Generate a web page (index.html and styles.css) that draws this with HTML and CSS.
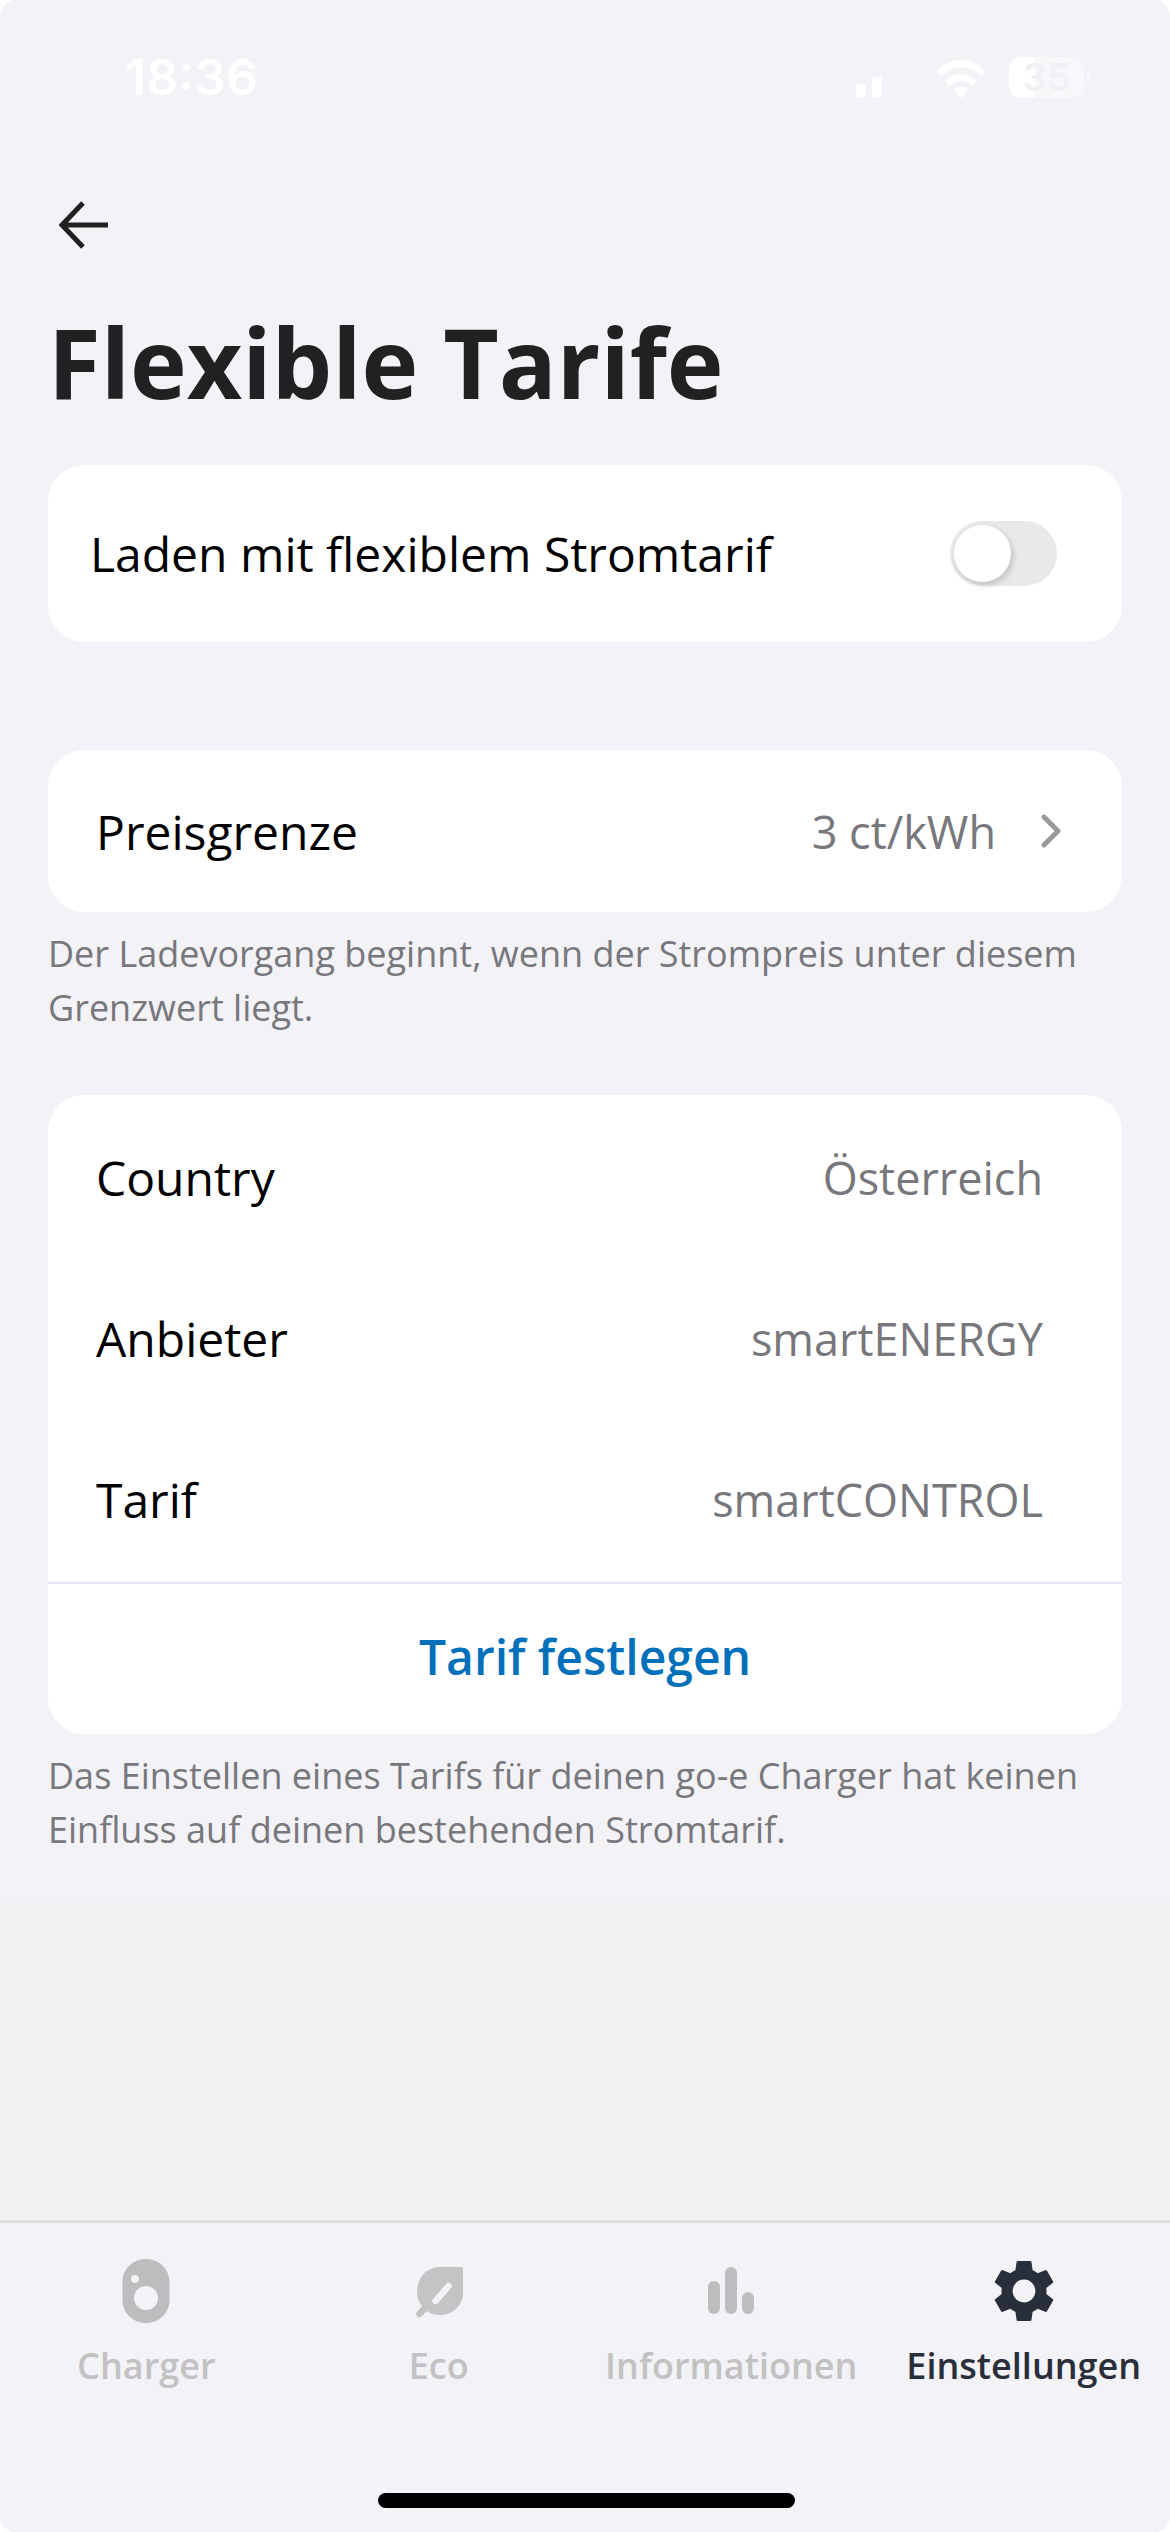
FILE: index.html
```html
<!DOCTYPE html>
<html lang="de">
<head>
<meta charset="utf-8">
<title>Flexible Tarife</title>
<link rel="stylesheet" href="styles.css">
</head>
<body>
<div class="app">
  <div class="content">
    <header class="status">
      <span class="time">18:36</span>
      <div class="status-icons">
        <svg class="signal" width="58" height="36" viewBox="0 0 58 36"><rect x="0" y="22" width="10" height="14" rx="3" fill="#fff"/><rect x="16" y="15" width="10" height="21" rx="3" fill="#fff"/><rect x="32" y="8" width="10" height="28" rx="3" fill="#fff" opacity=".2"/><rect x="48" y="0" width="10" height="36" rx="3" fill="#fff" opacity=".2"/></svg>
        <svg class="wifi" width="50" height="38" viewBox="0 0 50 38"><path d="M0 12C6 5 15 0 25 0s19 5 25 12l-5 5C40 11 33 7 25 7S10 11 5 17Z M9 21c4-4 10-7 16-7s12 3 16 7l-5 5c-3-3-7-5-11-5s-8 2-11 5Z M17 30c2-2 5-3 8-3s6 1 8 3l-8 8Z" fill="#fff"/></svg>
        <div class="battery"><span class="battery-text">35</span></div>
        <div class="battery-nub"></div>
      </div>
    </header>
    <button class="back" aria-label="Zurück">
      <svg width="50" height="48" viewBox="0 0 50 48"><path d="M24 2 3 24l21 22M3 24h46" fill="none" stroke="#212121" stroke-width="5"/></svg>
    </button>
    <h1 class="title">Flexible Tarife</h1>

    <section class="card toggle-card">
      <span class="toggle-label">Laden mit flexiblem Stromtarif</span>
      <div class="toggle"><div class="knob"></div></div>
    </section>

    <section class="card price-card">
      <span class="label">Preisgrenze</span>
      <span class="value">3 ct/kWh</span>
      <svg class="chevron" width="20" height="34" viewBox="0 0 20 34"><path d="M3 3l14 14L3 31" fill="none" stroke="#9a9a9a" stroke-width="5" stroke-linecap="round" stroke-linejoin="round"/></svg>
    </section>
    <p class="note">Der Ladevorgang beginnt, wenn der Strompreis unter diesem Grenzwert liegt.</p>

    <section class="card tariff-card">
      <div class="row"><span class="label">Country</span><span class="value">Österreich</span></div>
      <div class="row"><span class="label">Anbieter</span><span class="value">smartENERGY</span></div>
      <div class="row"><span class="label">Tarif</span><span class="value">smartCONTROL</span></div>
      <div class="action">Tarif festlegen</div>
    </section>
    <p class="note">Das Einstellen eines Tarifs für deinen go-e Charger hat keinen Einfluss auf deinen bestehenden Stromtarif.</p>
  </div>
  <div class="filler"></div>
  <nav class="tabs">
    <div class="tab">
      <svg class="tab-icon" width="64" height="64" viewBox="0 0 64 64"><path fill-rule="evenodd" d="M32 0c13 0 23.500 10 23.500 23v18c0 13-10.500 23-23.500 23S8.500 54 8.500 41V23C8.500 10 19 0 32 0Zm-11 24a4 4 0 1 0 0-8 4 4 0 0 0 0 8Zm11 3a12 12 0 1 0 0 24 12 12 0 0 0 0-24Z" fill="#bdbdbd"/></svg>
      <span>Charger</span>
    </div>
    <div class="tab">
      <svg class="tab-icon" width="64" height="64" viewBox="0 0 64 64"><path fill-rule="evenodd" d="M56 8v26c0 13-11 22-23 22-5 0-9-1-13-4l-5 5a3 3 0 0 1-5-4l5-6c-3-4-5-8-5-13C10 18 20 8 33 8Zm-25 36 13-15a3 3 0 0 0-5-4L26 40a3 3 0 0 0 5 4Z" fill="#c4c4c4"/></svg>
      <span>Eco</span>
    </div>
    <div class="tab">
      <svg class="tab-icon" width="64" height="64" viewBox="0 0 64 64"><rect x="9" y="22" width="12" height="33" rx="6" fill="#bdbdbd"/><rect x="26" y="8" width="12" height="47" rx="6" fill="#bdbdbd"/><rect x="43" y="33" width="12" height="22" rx="6" fill="#bdbdbd"/></svg>
      <span>Informationen</span>
    </div>
    <div class="tab active">
      <svg class="tab-icon" width="64" height="64" viewBox="1.33 1.33 21.33 21.33"><path fill-rule="evenodd" d="M19.430 12.980c.04-.32.07-.64.070-.98s-.03-.66-.07-.98l2.110-1.650a.5.500 0 0 0 .120-.640l-2-3.460a.5.500 0 0 0-.610-.220l-2.490 1a7.300 7.300 0 0 0-1.690-.980l-.380-2.650A.49.490 0 0 0 14 2h-4a.49.490 0 0 0-.490.420l-.380 2.650a7.700 7.700 0 0 0-1.690.980l-2.490-1a.5.500 0 0 0-.610.220l-2 3.460a.49.490 0 0 0 .120.640l2.110 1.650c-.04.320-.07.650-.07.980s.03.660.07.980l-2.110 1.650a.5.500 0 0 0-.120.640l2 3.460a.5.500 0 0 0 .610.220l2.490-1c.520.400 1.080.730 1.690.980l.380 2.650c.030.240.240.420.490.420h4c.250 0 .460-.180.490-.420l.380-2.650a7.700 7.700 0 0 0 1.690-.980l2.490 1a.5.500 0 0 0 .610-.220l2-3.460a.5.500 0 0 0-.120-.640ZM12 15.800a3.800 3.800 0 1 1 0-7.600 3.800 3.800 0 0 1 0 7.600Z" fill="#282e3a"/></svg>
      <span>Einstellungen</span>
    </div>
    <div class="home-indicator"></div>
  </nav>
</div>
</body>
</html>
```
FILE: styles.css
```css
* { box-sizing: border-box; }
html, body { margin: 0; padding: 0; background: #fff; }
body { width: 1170px; height: 2532px; overflow: hidden; font-family: "Open Sans", sans-serif; }
.app { width: 1170px; height: 2532px; display: flex; flex-direction: column; border-radius: 16px; overflow: hidden; background: #f2f2f2; }
.content { background: #f2f2f7; height: 1903px; flex: none; }
.status { height: 150px; padding: 42px 79px 0 125px; display: flex; justify-content: space-between; align-items: flex-start; }
.time { font-family: "Inter", sans-serif; font-weight: 600; font-size: 50px; line-height: 70px; color: #fff; letter-spacing: 0; }
.status-icons { display: flex; align-items: flex-end; padding-top: 15px; height: 56px; }
.signal { margin-right: 22px; }
.wifi { margin-right: 23px; }
.battery { width: 75px; height: 41px; border-radius: 12px; background: linear-gradient(90deg, #fff 26px, rgba(255,255,255,.45) 26px); display: flex; align-items: center; justify-content: center; }
.battery-text { font-family: "Inter", sans-serif; font-weight: 600; font-size: 38px; line-height: 41px; color: #f0f0f5; }
.battery-nub { width: 4px; height: 11px; margin: 0 0 15px 3px; border-radius: 0 4px 4px 0; background: rgba(255,255,255,.5); }
.back { display: block; margin: 51px 0 0 59px; padding: 0; border: 0; background: none; width: 50px; height: 48px; }
.title { margin: 48px 0 0 48px; font-size: 96px; line-height: 130px; font-weight: 700; color: #212121; }
.card { margin: 0 48px; background: #fff; border-radius: 36px; }
.toggle-card { height: 177px; margin-top: 38px; display: flex; align-items: center; justify-content: space-between; padding: 0 65px 0 42px; }
.toggle-label, .label { font-size: 48px; color: #000; }
.label { flex: 1; }
.value { font-size: 45px; color: #77777c; }
.toggle { width: 107px; height: 65px; border-radius: 33px; background: #e9e9ea; padding: 4px; }
.knob { width: 57px; height: 57px; border-radius: 50%; background: #fff; box-shadow: 2px 3px 6px rgba(0,0,0,.18); }
.price-card { height: 162px; margin-top: 108px; display: flex; align-items: center; padding: 0 61px 0 48px; }
.chevron { margin-left: 45px; }
.note { margin: 15px 48px 0; font-size: 36px; line-height: 54px; color: #77777c; }
.tariff-card { margin-top: 60px; padding-top: 2px; overflow: hidden; }
.row { height: 161px; display: flex; align-items: center; padding: 0 79px 0 48px; }
.action { border-top: 2px solid #e3e6ee; margin-top: 2px; height: 152px; display: flex; align-items: center; justify-content: center; font-size: 48px; font-weight: 600; color: #0070bb; padding-bottom: 5px; }
.filler { flex: 1; }
.tabs { position: relative; height: 312px; border-top: 3px solid #e0e0e0; background: #f2f2f7; display: grid; grid-template-columns: repeat(4, 1fr); align-content: start; padding-top: 36px; }
.tab { display: flex; flex-direction: column; align-items: center; font-size: 36px; font-weight: 600; line-height: 50px; color: #c2c2c2; }
.tab-icon { display: block; margin-bottom: 18px; }
.tab.active { color: #282e3a; }
.home-indicator { position: absolute; left: 378px; top: 270px; width: 417px; height: 15px; border-radius: 8px; background: #000; }
```
